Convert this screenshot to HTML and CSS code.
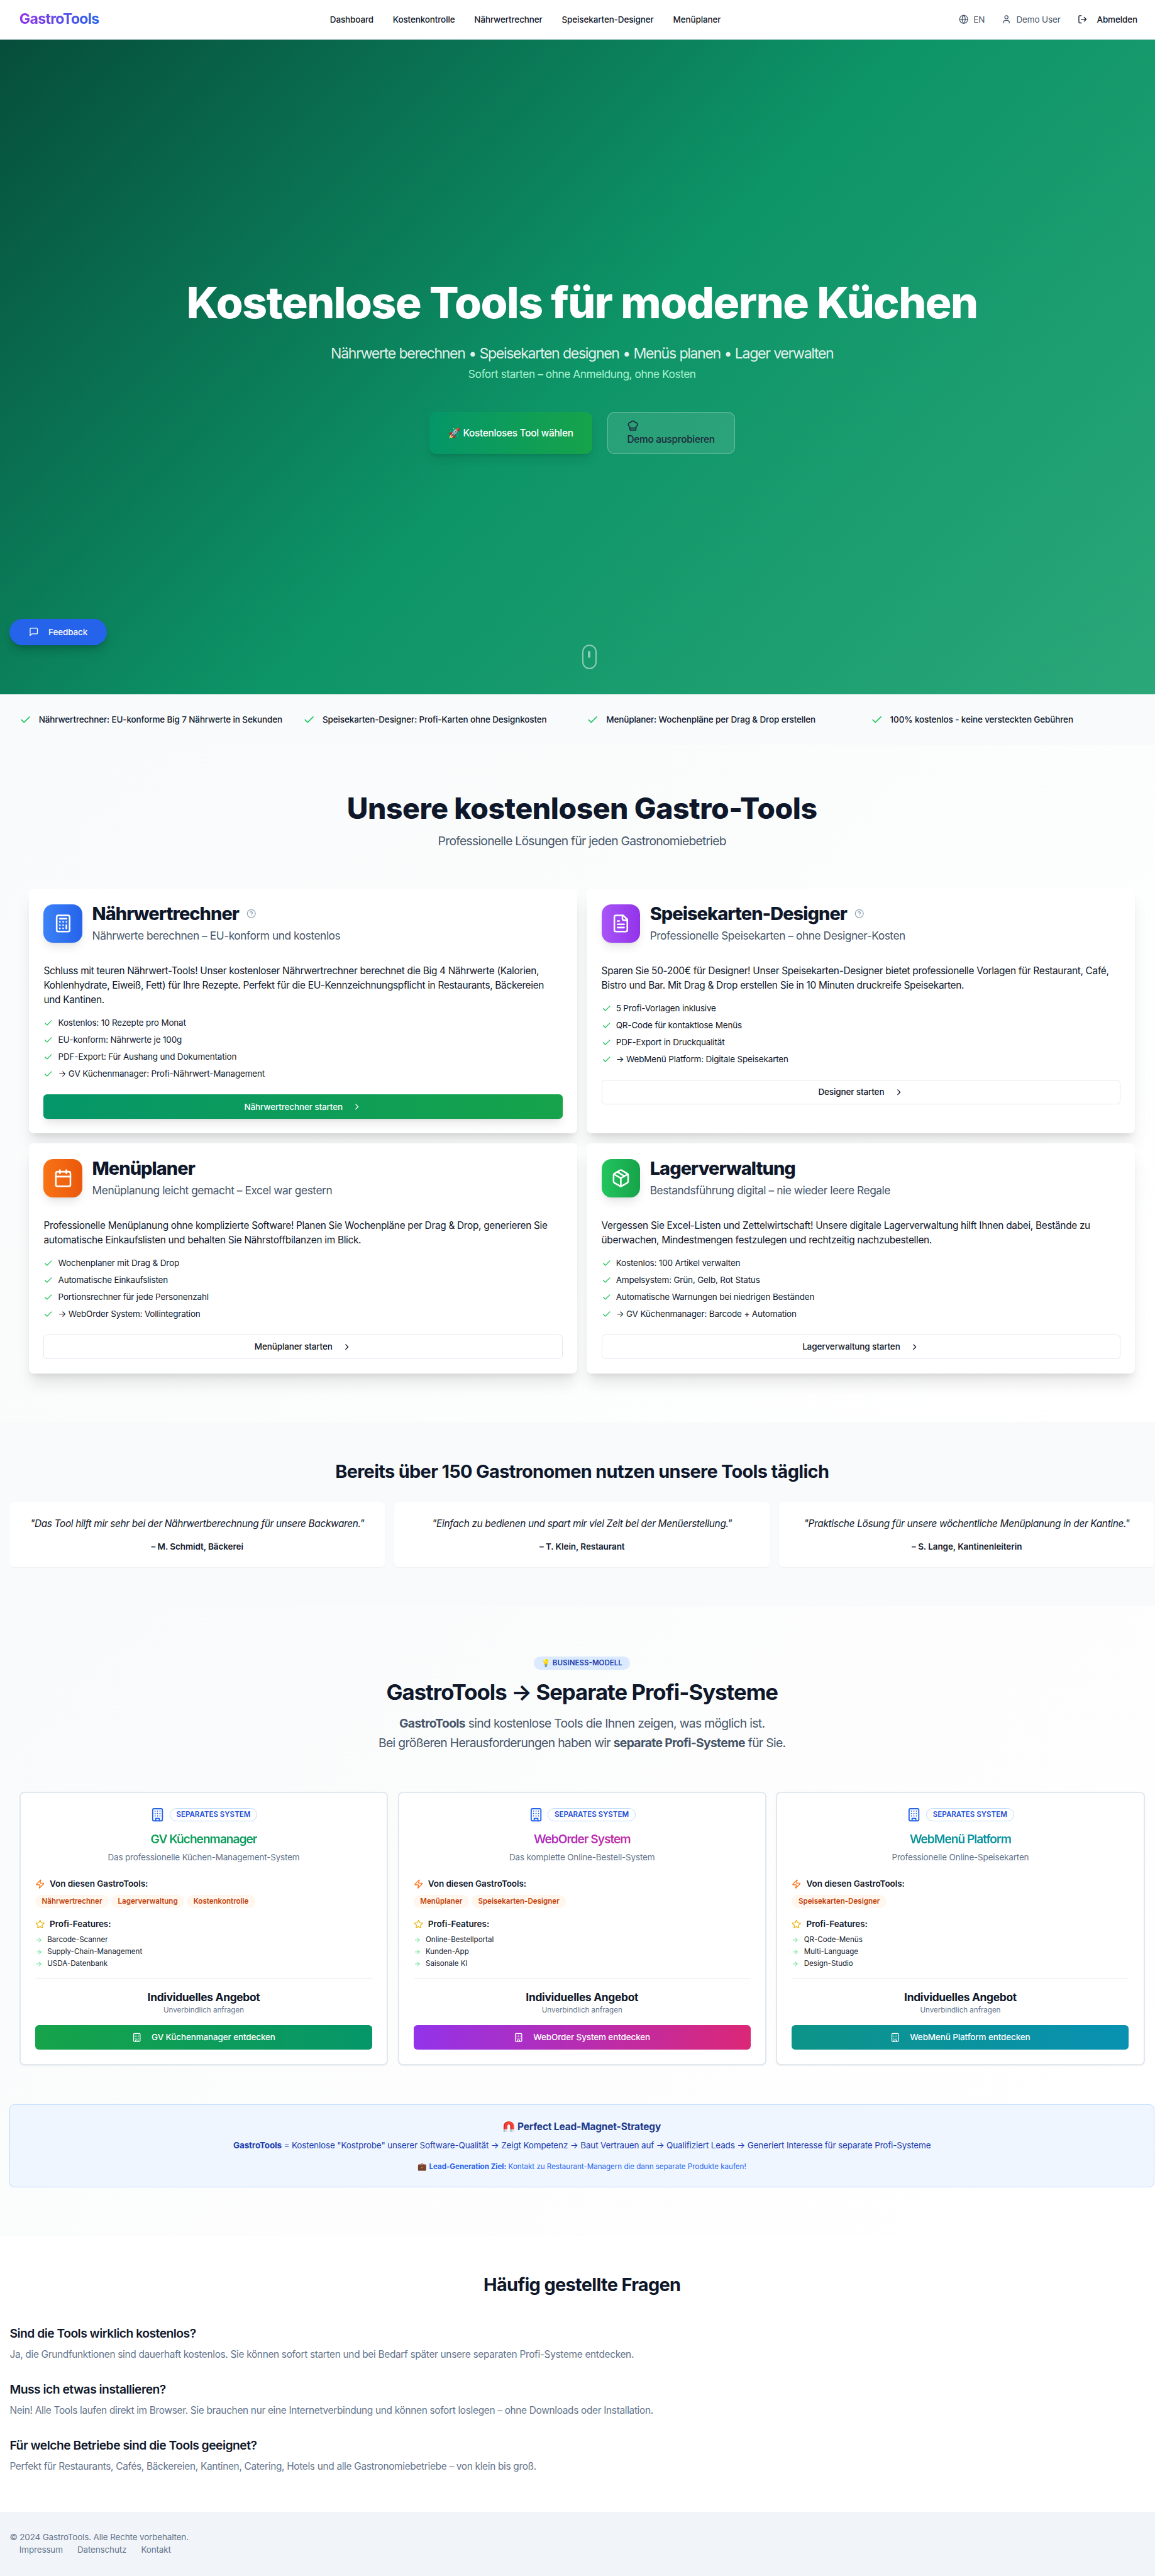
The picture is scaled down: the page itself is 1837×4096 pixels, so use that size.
FILE: index.html
```html
<!DOCTYPE html>
<html lang="de">
<head>
<meta charset="utf-8">
<meta name="viewport" content="width=device-width, initial-scale=1">
<title>GastroTools – Kostenlose Tools für moderne Küchen</title>
<link rel="stylesheet" href="styles.css">
</head>
<body>
<svg class="sprite" aria-hidden="true">
  <symbol id="i-globe" viewBox="0 0 24 24"><circle cx="12" cy="12" r="10"/><path d="M12 2a14.5 14.5 0 0 0 0 20 14.5 14.5 0 0 0 0-20"/><path d="M2 12h20"/></symbol>
  <symbol id="i-user" viewBox="0 0 24 24"><path d="M19 21v-2a4 4 0 0 0-4-4H9a4 4 0 0 0-4 4v2"/><circle cx="12" cy="7" r="4"/></symbol>
  <symbol id="i-logout" viewBox="0 0 24 24"><path d="M9 21H5a2 2 0 0 1-2-2V5a2 2 0 0 1 2-2h4"/><path d="m16 17 5-5-5-5"/><path d="M21 12H9"/></symbol>
  <symbol id="i-chef" viewBox="0 0 24 24"><path d="M17 21a1 1 0 0 0 1-1v-5.35c0-.457.316-.844.727-1.041a4 4 0 0 0-2.134-7.589 5 5 0 0 0-9.186 0 4 4 0 0 0-2.134 7.588c.411.198.727.585.727 1.041V20a1 1 0 0 0 1 1Z"/><path d="M6 17h12"/></symbol>
  <symbol id="i-message" viewBox="0 0 24 24"><path d="M21 15a2 2 0 0 1-2 2H7l-4 4V5a2 2 0 0 1 2-2h14a2 2 0 0 1 2 2z"/></symbol>
  <symbol id="i-check" viewBox="0 0 24 24"><path d="M20 6 9 17l-5-5"/></symbol>
  <symbol id="i-help" viewBox="0 0 24 24"><circle cx="12" cy="12" r="10"/><path d="M9.09 9a3 3 0 0 1 5.83 1c0 2-3 3-3 3"/><path d="M12 17h.01"/></symbol>
  <symbol id="i-chevron" viewBox="0 0 24 24"><path d="m9 18 6-6-6-6"/></symbol>
  <symbol id="i-calculator" viewBox="0 0 24 24"><rect width="16" height="20" x="4" y="2" rx="2"/><path d="M8 6h8"/><path d="M16 14v4"/><path d="M16 10h.01M12 10h.01M8 10h.01M12 14h.01M8 14h.01M12 18h.01M8 18h.01"/></symbol>
  <symbol id="i-file" viewBox="0 0 24 24"><path d="M15 2H6a2 2 0 0 0-2 2v16a2 2 0 0 0 2 2h12a2 2 0 0 0 2-2V7Z"/><path d="M14 2v4a2 2 0 0 0 2 2h4"/><path d="M10 9H8"/><path d="M16 13H8"/><path d="M16 17H8"/></symbol>
  <symbol id="i-calendar" viewBox="0 0 24 24"><path d="M8 2v4"/><path d="M16 2v4"/><rect width="18" height="18" x="3" y="4" rx="2"/><path d="M3 10h18"/></symbol>
  <symbol id="i-package" viewBox="0 0 24 24"><path d="M11 21.73a2 2 0 0 0 2 0l7-4A2 2 0 0 0 21 16V8a2 2 0 0 0-1-1.73l-7-4a2 2 0 0 0-2 0l-7 4A2 2 0 0 0 3 8v8a2 2 0 0 0 1 1.73z"/><path d="M12 22V12"/><path d="m3.3 7 8.7 5 8.7-5"/><path d="m7.5 4.27 9 5.15"/></symbol>
  <symbol id="i-building" viewBox="0 0 24 24"><rect width="16" height="20" x="4" y="2" rx="2"/><path d="M9 22v-4h6v4"/><path d="M8 6h.01M16 6h.01M12 6h.01M12 10h.01M12 14h.01M16 10h.01M16 14h.01M8 10h.01M8 14h.01"/></symbol>
  <symbol id="i-zap" viewBox="0 0 24 24"><path d="M4 14a1 1 0 0 1-.78-1.63l9.9-10.2a.5.5 0 0 1 .86.46l-1.92 6.02A1 1 0 0 0 13 10h7a1 1 0 0 1 .78 1.63l-9.9 10.2a.5.5 0 0 1-.86-.46l1.92-6.02A1 1 0 0 0 11 14z"/></symbol>
  <symbol id="i-star" viewBox="0 0 24 24"><path d="m12 2 3.09 6.26L22 9.27l-5 4.87 1.18 6.88L12 17.77l-6.18 3.25L7 14.14 2 9.27l6.91-1.01z"/></symbol>
  <symbol id="i-arrow" viewBox="0 0 24 24"><path d="M5 12h14"/><path d="m12 5 7 7-7 7"/></symbol>
</svg>

<div class="page">
  <header class="topbar">
    <a class="logo">GastroTools</a>
    <nav class="nav">
      <a>Dashboard</a><a>Kostenkontrolle</a><a>Nährwertrechner</a><a>Speisekarten-Designer</a><a>Menüplaner</a>
    </nav>
    <div class="account">
      <span class="account-item"><svg class="icon"><use href="#i-globe"/></svg>EN</span>
      <span class="account-item user"><svg class="icon"><use href="#i-user"/></svg>Demo User</span>
      <button class="logout"><svg class="icon"><use href="#i-logout"/></svg>Abmelden</button>
    </div>
  </header>

  <section class="hero">
    <div class="hero-inner">
      <h1>Kostenlose Tools für moderne Küchen</h1>
      <p class="hero-lead">Nährwerte berechnen • Speisekarten designen • Menüs planen • Lager verwalten</p>
      <p class="hero-note">Sofort starten – ohne Anmeldung, ohne Kosten</p>
      <div class="hero-actions">
        <button class="cta">🚀 Kostenloses Tool wählen</button>
        <button class="cta cta-ghost"><svg class="icon icon-20"><use href="#i-chef"/></svg>Demo ausprobieren</button>
      </div>
    </div>
    <button class="feedback"><svg class="icon"><use href="#i-message"/></svg>Feedback</button>
    <div class="mouse"><span></span></div>
  </section>

  <section class="benefits">
    <div><svg class="icon icon-20"><use href="#i-check"/></svg>Nährwertrechner: EU-konforme Big 7 Nährwerte in Sekunden</div>
    <div><svg class="icon icon-20"><use href="#i-check"/></svg>Speisekarten-Designer: Profi-Karten ohne Designkosten</div>
    <div><svg class="icon icon-20"><use href="#i-check"/></svg>Menüplaner: Wochenpläne per Drag &amp; Drop erstellen</div>
    <div><svg class="icon icon-20"><use href="#i-check"/></svg>100% kostenlos - keine versteckten Gebühren</div>
  </section>

  <section class="tools">
    <h2>Unsere kostenlosen Gastro-Tools</h2>
    <p class="section-lead">Professionelle Lösungen für jeden Gastronomiebetrieb</p>
    <div class="tool-grid">
      <article class="tool">
        <div class="tool-head">
          <div class="tool-icon blue"><svg class="icon icon-32"><use href="#i-calculator"/></svg></div>
          <div>
            <h3>Nährwertrechner<svg class="icon help"><use href="#i-help"/></svg></h3>
            <p>Nährwerte berechnen – EU-konform und kostenlos</p>
          </div>
        </div>
        <p class="tool-text">Schluss mit teuren Nährwert-Tools! Unser kostenloser Nährwertrechner berechnet die Big 4 Nährwerte (Kalorien, Kohlenhydrate, Eiweiß, Fett) für Ihre Rezepte. Perfekt für die EU-Kennzeichnungspflicht in Restaurants, Bäckereien und Kantinen.</p>
        <ul class="checks">
          <li><svg class="icon"><use href="#i-check"/></svg>Kostenlos: 10 Rezepte pro Monat</li>
          <li><svg class="icon"><use href="#i-check"/></svg>EU-konform: Nährwerte je 100g</li>
          <li><svg class="icon"><use href="#i-check"/></svg>PDF-Export: Für Aushang und Dokumentation</li>
          <li><svg class="icon"><use href="#i-check"/></svg>→ GV Küchenmanager: Profi-Nährwert-Management</li>
        </ul>
        <button class="btn btn-primary">Nährwertrechner starten<svg class="icon"><use href="#i-chevron"/></svg></button>
      </article>
      <article class="tool">
        <div class="tool-head">
          <div class="tool-icon purple"><svg class="icon icon-32"><use href="#i-file"/></svg></div>
          <div>
            <h3>Speisekarten-Designer<svg class="icon help"><use href="#i-help"/></svg></h3>
            <p>Professionelle Speisekarten – ohne Designer-Kosten</p>
          </div>
        </div>
        <p class="tool-text">Sparen Sie 50-200€ für Designer! Unser Speisekarten-Designer bietet professionelle Vorlagen für Restaurant, Café, Bistro und Bar. Mit Drag &amp; Drop erstellen Sie in 10 Minuten druckreife Speisekarten.</p>
        <ul class="checks">
          <li><svg class="icon"><use href="#i-check"/></svg>5 Profi-Vorlagen inklusive</li>
          <li><svg class="icon"><use href="#i-check"/></svg>QR-Code für kontaktlose Menüs</li>
          <li><svg class="icon"><use href="#i-check"/></svg>PDF-Export in Druckqualität</li>
          <li><svg class="icon"><use href="#i-check"/></svg>→ WebMenü Platform: Digitale Speisekarten</li>
        </ul>
        <button class="btn btn-outline">Designer starten<svg class="icon"><use href="#i-chevron"/></svg></button>
      </article>
      <article class="tool">
        <div class="tool-head">
          <div class="tool-icon orange"><svg class="icon icon-32"><use href="#i-calendar"/></svg></div>
          <div>
            <h3>Menüplaner</h3>
            <p>Menüplanung leicht gemacht – Excel war gestern</p>
          </div>
        </div>
        <p class="tool-text">Professionelle Menüplanung ohne komplizierte Software! Planen Sie Wochenpläne per Drag &amp; Drop, generieren Sie automatische Einkaufslisten und behalten Sie Nährstoffbilanzen im Blick.</p>
        <ul class="checks">
          <li><svg class="icon"><use href="#i-check"/></svg>Wochenplaner mit Drag &amp; Drop</li>
          <li><svg class="icon"><use href="#i-check"/></svg>Automatische Einkaufslisten</li>
          <li><svg class="icon"><use href="#i-check"/></svg>Portionsrechner für jede Personenzahl</li>
          <li><svg class="icon"><use href="#i-check"/></svg>→ WebOrder System: Vollintegration</li>
        </ul>
        <button class="btn btn-outline">Menüplaner starten<svg class="icon"><use href="#i-chevron"/></svg></button>
      </article>
      <article class="tool">
        <div class="tool-head">
          <div class="tool-icon green"><svg class="icon icon-32"><use href="#i-package"/></svg></div>
          <div>
            <h3>Lagerverwaltung</h3>
            <p>Bestandsführung digital – nie wieder leere Regale</p>
          </div>
        </div>
        <p class="tool-text">Vergessen Sie Excel-Listen und Zettelwirtschaft! Unsere digitale Lagerverwaltung hilft Ihnen dabei, Bestände zu überwachen, Mindestmengen festzulegen und rechtzeitig nachzubestellen.</p>
        <ul class="checks">
          <li><svg class="icon"><use href="#i-check"/></svg>Kostenlos: 100 Artikel verwalten</li>
          <li><svg class="icon"><use href="#i-check"/></svg>Ampelsystem: Grün, Gelb, Rot Status</li>
          <li><svg class="icon"><use href="#i-check"/></svg>Automatische Warnungen bei niedrigen Beständen</li>
          <li><svg class="icon"><use href="#i-check"/></svg>→ GV Küchenmanager: Barcode + Automation</li>
        </ul>
        <button class="btn btn-outline">Lagerverwaltung starten<svg class="icon"><use href="#i-chevron"/></svg></button>
      </article>
    </div>
  </section>

  <section class="voices">
    <h2>Bereits über 150 Gastronomen nutzen unsere Tools täglich</h2>
    <div class="voice-grid">
      <blockquote><p>"Das Tool hilft mir sehr bei der Nährwertberechnung für unsere Backwaren."</p><footer>– M. Schmidt, Bäckerei</footer></blockquote>
      <blockquote><p>"Einfach zu bedienen und spart mir viel Zeit bei der Menüerstellung."</p><footer>– T. Klein, Restaurant</footer></blockquote>
      <blockquote><p>"Praktische Lösung für unsere wöchentliche Menüplanung in der Kantine."</p><footer>– S. Lange, Kantinenleiterin</footer></blockquote>
    </div>
  </section>

  <section class="business">
    <span class="business-badge">💡 BUSINESS-MODELL</span>
    <h2>GastroTools → Separate Profi-Systeme</h2>
    <p class="business-lead"><strong>GastroTools</strong> sind kostenlose Tools die Ihnen zeigen, was möglich ist.<br>Bei größeren Herausforderungen haben wir <strong>separate Profi-Systeme</strong> für Sie.</p>
    <div class="system-grid">
      <article class="system">
        <div class="system-tag"><svg class="icon icon-24"><use href="#i-building"/></svg><span>SEPARATES SYSTEM</span></div>
        <h3 class="grad-green">GV Küchenmanager</h3>
        <p class="system-desc">Das professionelle Küchen-Management-System</p>
        <h4><svg class="icon zap"><use href="#i-zap"/></svg>Von diesen GastroTools:</h4>
        <div class="chips"><span>Nährwertrechner</span><span>Lagerverwaltung</span><span>Kostenkontrolle</span></div>
        <h4><svg class="icon star"><use href="#i-star"/></svg>Profi-Features:</h4>
        <ul class="features">
          <li><svg class="icon icon-12"><use href="#i-arrow"/></svg>Barcode-Scanner</li>
          <li><svg class="icon icon-12"><use href="#i-arrow"/></svg>Supply-Chain-Management</li>
          <li><svg class="icon icon-12"><use href="#i-arrow"/></svg>USDA-Datenbank</li>
        </ul>
        <div class="offer"><strong>Individuelles Angebot</strong><small>Unverbindlich anfragen</small></div>
        <button class="btn grad-green"><svg class="icon"><use href="#i-building"/></svg>GV Küchenmanager entdecken</button>
      </article>
      <article class="system">
        <div class="system-tag"><svg class="icon icon-24"><use href="#i-building"/></svg><span>SEPARATES SYSTEM</span></div>
        <h3 class="grad-pink">WebOrder System</h3>
        <p class="system-desc">Das komplette Online-Bestell-System</p>
        <h4><svg class="icon zap"><use href="#i-zap"/></svg>Von diesen GastroTools:</h4>
        <div class="chips"><span>Menüplaner</span><span>Speisekarten-Designer</span></div>
        <h4><svg class="icon star"><use href="#i-star"/></svg>Profi-Features:</h4>
        <ul class="features">
          <li><svg class="icon icon-12"><use href="#i-arrow"/></svg>Online-Bestellportal</li>
          <li><svg class="icon icon-12"><use href="#i-arrow"/></svg>Kunden-App</li>
          <li><svg class="icon icon-12"><use href="#i-arrow"/></svg>Saisonale KI</li>
        </ul>
        <div class="offer"><strong>Individuelles Angebot</strong><small>Unverbindlich anfragen</small></div>
        <button class="btn grad-pink"><svg class="icon"><use href="#i-building"/></svg>WebOrder System entdecken</button>
      </article>
      <article class="system">
        <div class="system-tag"><svg class="icon icon-24"><use href="#i-building"/></svg><span>SEPARATES SYSTEM</span></div>
        <h3 class="grad-teal">WebMenü Platform</h3>
        <p class="system-desc">Professionelle Online-Speisekarten</p>
        <h4><svg class="icon zap"><use href="#i-zap"/></svg>Von diesen GastroTools:</h4>
        <div class="chips"><span>Speisekarten-Designer</span></div>
        <h4><svg class="icon star"><use href="#i-star"/></svg>Profi-Features:</h4>
        <ul class="features">
          <li><svg class="icon icon-12"><use href="#i-arrow"/></svg>QR-Code-Menüs</li>
          <li><svg class="icon icon-12"><use href="#i-arrow"/></svg>Multi-Language</li>
          <li><svg class="icon icon-12"><use href="#i-arrow"/></svg>Design-Studio</li>
        </ul>
        <div class="offer"><strong>Individuelles Angebot</strong><small>Unverbindlich anfragen</small></div>
        <button class="btn grad-teal"><svg class="icon"><use href="#i-building"/></svg>WebMenü Platform entdecken</button>
      </article>
    </div>
    <div class="strategy">
      <h3><span class="magnet">🧲</span> Perfect Lead-Magnet-Strategy</h3>
      <p><strong>GastroTools</strong> = Kostenlose "Kostprobe" unserer Software-Qualität → Zeigt Kompetenz → Baut Vertrauen auf → Qualifiziert Leads → Generiert Interesse für separate Profi-Systeme</p>
      <small>💼 <strong>Lead-Generation Ziel:</strong> Kontakt zu Restaurant-Managern die dann separate Produkte kaufen!</small>
    </div>
  </section>

  <section class="faq">
    <h2>Häufig gestellte Fragen</h2>
    <dl>
      <dt>Sind die Tools wirklich kostenlos?</dt>
      <dd>Ja, die Grundfunktionen sind dauerhaft kostenlos. Sie können sofort starten und bei Bedarf später unsere separaten Profi-Systeme entdecken.</dd>
      <dt>Muss ich etwas installieren?</dt>
      <dd>Nein! Alle Tools laufen direkt im Browser. Sie brauchen nur eine Internetverbindung und können sofort loslegen – ohne Downloads oder Installation.</dd>
      <dt>Für welche Betriebe sind die Tools geeignet?</dt>
      <dd>Perfekt für Restaurants, Cafés, Bäckereien, Kantinen, Catering, Hotels und alle Gastronomiebetriebe – von klein bis groß.</dd>
    </dl>
  </section>

  <footer class="site-footer">
    <p>© 2024 GastroTools. Alle Rechte vorbehalten.</p>
    <div class="footer-links"><a>Impressum</a><a>Datenschutz</a><a>Kontakt</a></div>
  </footer>
</div>
</body>
</html>
```
FILE: styles.css
```css
/* Root size is fluid: one rem is 16/1905 of the window width. */
html { font-size: calc(100vw * 16 / 1905); overflow-x: hidden; background: #f1f5f9; }
*, *::before, *::after { box-sizing: border-box; }
body, h1, h2, h3, h4, p, ul, dl, dd, blockquote { margin: 0; padding: 0; }
body {
  font-family: Inter, "Noto Sans", "Noto Color Emoji", sans-serif;
  line-height: 1.5;
  color: #0f172a;
  overflow-x: hidden;
  -webkit-font-smoothing: antialiased;
}
ul { list-style: none; }
button { font: inherit; color: inherit; border: 0; background: none; }
.sprite { position: absolute; width: 0; height: 0; }
.page { width: 120rem; overflow: hidden; background: #fff; }

.icon {
  width: 1rem; height: 1rem; flex: none;
  fill: none; stroke: currentColor; stroke-width: 2;
  stroke-linecap: round; stroke-linejoin: round;
}
.icon-12 { width: .75rem; height: .75rem; }
.icon-20 { width: 1.25rem; height: 1.25rem; }
.icon-24 { width: 1.5rem; height: 1.5rem; }
.icon-32 { width: 2rem; height: 2rem; }

/* Top bar */
.topbar {
  height: 4.0625rem; padding: 0 2rem;
  display: flex; align-items: center; justify-content: space-between;
  border-bottom: 1px solid #e2e8f0;
}
.logo {
  font-size: 1.5rem; line-height: 2rem; font-weight: 700; letter-spacing: -.031em;
  background: linear-gradient(90deg, #9333ea, #2563eb);
  -webkit-background-clip: text; background-clip: text; color: transparent;
}
.nav { display: flex; gap: 2rem; font-size: .875rem; font-weight: 500; letter-spacing: -.01em; }
.account {
  display: flex; align-items: center; gap: 1rem; padding-left: .75rem;
  font-size: .875rem; letter-spacing: -.01em; color: #475569;
}
.account-item { display: flex; align-items: center; gap: .5rem; }
.user { margin-left: .75rem; }
.logout {
  display: flex; align-items: center; gap: 1rem; padding: 0 .75rem;
  font-weight: 500; letter-spacing: -.01em; color: #0f172a;
}

/* Hero */
.hero {
  position: relative; height: 67.5rem;
  display: flex; align-items: center; justify-content: center;
  background: linear-gradient(135deg, #064e3b 0%, #0d9467 50%, #2ba87a 100%);
  color: #fff; text-align: center;
}
.hero-inner { padding-top: .1875rem; }
.hero h1 { font-size: 4.5rem; line-height: 1; font-weight: 850; letter-spacing: -.021em; }
.hero-lead { margin-top: 1.9375rem; font-size: 1.5rem; line-height: 2rem; letter-spacing: -.058em; word-spacing: .02em; color: rgba(255,255,255,.9); }
.hero-note { margin-top: .25rem; font-size: 1.125rem; line-height: 1.75rem; letter-spacing: -.027em; color: #a7f3d0; }
.hero-actions { margin-top: 3rem; display: flex; gap: 1.5rem; justify-content: center; }
.cta {
  height: 4.375rem; padding: 0 2rem; border-radius: .75rem;
  font-size: 1rem; font-weight: 500; line-height: 1.5rem; letter-spacing: -.02em;
  text-align: left; white-space: nowrap;
  background: linear-gradient(90deg, #059669, #16a34a);
  box-shadow: 0 .625rem .9375rem -.1875rem rgba(0,0,0,.1), 0 .25rem .375rem -.25rem rgba(0,0,0,.1);
}
.cta-ghost {
  background: rgba(255,255,255,.1); border: 1px solid rgba(255,255,255,.3);
  color: #1e293b; box-shadow: none;
}
.cta-ghost .icon { display: block; }
.feedback {
  position: absolute; left: 1rem; bottom: 5.0625rem;
  width: 10rem; height: 2.75rem; padding: 0 2rem; border-radius: 2rem;
  display: flex; align-items: center; gap: 1rem;
  font-size: .875rem; font-weight: 500; letter-spacing: -.01em; color: #fff; background: #2563eb;
  box-shadow: 0 .625rem .9375rem -.1875rem rgba(0,0,0,.2), 0 .25rem .375rem -.25rem rgba(0,0,0,.2);
}
.mouse {
  position: absolute; left: 50%; bottom: 2.625rem;
  width: 1.5rem; height: 2.5rem; padding-top: .5rem;
  border: 2px solid rgba(255,255,255,.5); border-radius: 1rem;
  display: flex; justify-content: center;
}
.mouse span { width: .25rem; height: .75rem; border-radius: .25rem; background: rgba(255,255,255,.5); }

/* Benefits strip */
.benefits {
  padding: 2rem; display: grid; grid-template-columns: repeat(4, 1fr); gap: 1rem;
  background: #f8fafc; font-size: .875rem; line-height: 1.25rem; font-weight: 500; letter-spacing: -.01em;
}
.benefits div { display: flex; align-items: center; gap: .75rem; white-space: nowrap; }
.benefits .icon, .checks .icon { color: #22c55e; }

/* Tools */
.tools {
  padding: 5rem 3rem; text-align: center;
  background: linear-gradient(135deg, #f8fafc 0%, #fbfdfc 50%, #fff 100%);
}
.tools h2 { font-size: 3rem; line-height: 3rem; font-weight: 800; letter-spacing: -.009em; }
.section-lead { margin-top: 1rem; font-size: 1.25rem; line-height: 1.75rem; letter-spacing: -.038em; color: #475569; }
.tool-grid { margin-top: 4rem; display: grid; grid-template-columns: repeat(2, 1fr); gap: 1rem; text-align: left; }
.tool {
  padding: 1.5rem; border-radius: .5rem; background: #fff;
  box-shadow: 0 1.25rem 1.5625rem -.3125rem rgba(0,0,0,.1), 0 .5rem .625rem -.375rem rgba(0,0,0,.1);
}
.tool-head { display: flex; align-items: center; gap: 1rem; }
.tool-icon {
  width: 4rem; height: 4rem; border-radius: 1rem; color: #fff;
  display: flex; align-items: center; justify-content: center;
  box-shadow: 0 .625rem .9375rem -.1875rem rgba(0,0,0,.1), 0 .25rem .375rem -.25rem rgba(0,0,0,.1);
}
.blue { background: linear-gradient(90deg, #3b82f6, #2563eb); }
.purple { background: linear-gradient(90deg, #a855f7, #9333ea); }
.orange { background: linear-gradient(90deg, #f97316, #ea580c); }
.green { background: linear-gradient(90deg, #22c55e, #16a34a); }
.tool h3 {
  display: flex; align-items: center; gap: .75rem;
  font-size: 1.875rem; line-height: 2.25rem; font-weight: 800; letter-spacing: -.033em;
}
.help { color: #94a3b8; }
.tool-head p { margin-top: .25rem; font-size: 1.125rem; line-height: 1.75rem; letter-spacing: -.0265em; color: #475569; }
.tool-text { margin-top: 2rem; font-size: 1rem; line-height: 1.5rem; letter-spacing: -.0205em; }
.checks { margin-top: 1rem; display: grid; gap: .5rem; font-size: .875rem; line-height: 1.25rem; letter-spacing: -.013em; }
.checks li { display: flex; align-items: center; gap: .5rem; }
.btn {
  width: 100%; height: 2.5rem; border-radius: .375rem;
  display: flex; align-items: center; justify-content: center; gap: 1rem;
  font-size: .875rem; font-weight: 500; letter-spacing: -.01em;
}
.tool .btn { margin-top: 1.5rem; }
.btn-primary {
  color: #fff; background: linear-gradient(90deg, #059669, #16a34a);
  box-shadow: 0 .625rem .9375rem -.1875rem rgba(0,0,0,.1), 0 .25rem .375rem -.25rem rgba(0,0,0,.1);
}
.btn-outline { border: 1px solid #e2e8f0; background: #fff; }

/* Testimonials */
.voices { padding: 4rem 1rem; background: #f8fafc; text-align: center; }
.voices h2, .faq h2 { font-size: 1.875rem; line-height: 2.25rem; font-weight: 700; letter-spacing: -.023em; }
.voice-grid { margin-top: 2rem; display: grid; grid-template-columns: repeat(3, 1fr); gap: 1rem; }
.voice-grid blockquote {
  padding: 1.5rem; border-radius: .5rem; background: #fff; line-height: 1.5rem;
  box-shadow: 0 1px 2px rgba(0,0,0,.05);
}
.voice-grid p { font-style: italic; letter-spacing: -.0225em; white-space: nowrap; }
.voice-grid footer { margin-top: 1rem; font-size: .875rem; line-height: 1.25rem; font-weight: 600; letter-spacing: -.005em; }

/* Professional systems */
.business {
  padding: 5.1875rem 1rem 5rem; text-align: center;
  background: linear-gradient(135deg, #f8fafc 0%, #fcfdfc 50%, #fff 100%);
}
.business-badge {
  display: block; width: fit-content; height: 1.375rem; margin: 0 auto; padding: 0 .8125rem;
  border-radius: 1rem; background: #dbeafe; color: #1e40af;
  font-size: .75rem; line-height: 1.375rem; font-weight: 600;
}
.business h2 { margin-top: 1rem; font-size: 2.25rem; line-height: 2.5rem; font-weight: 700; letter-spacing: -.028em; }
.business-lead { margin-top: 1rem; font-size: 1.25rem; line-height: 1.625; letter-spacing: -.034em; color: #475569; }
.system-grid { margin: 4rem 1rem 0; display: grid; grid-template-columns: repeat(3, 1fr); gap: 1rem; }
.system {
  padding: 1.5rem; border: 2px solid #e2e8f0; border-radius: .5rem; background: #fff;
  box-shadow: 0 1px 2px rgba(0,0,0,.05);
}
.system-tag { display: flex; align-items: center; justify-content: center; gap: .5rem; color: #2563eb; }
.system-tag span {
  height: 1.375rem; padding: 0 .625rem; border: 1px solid #bfdbfe; border-radius: 1rem;
  color: #1d4ed8; font-size: .75rem; line-height: 1.25rem; font-weight: 600;
}
.system h3 { margin-top: .875rem; font-size: 1.25rem; line-height: 1.75rem; font-weight: 600; letter-spacing: -.056em; }
.grad-green { background: linear-gradient(90deg, #16a34a, #059669); }
.grad-pink { background: linear-gradient(90deg, #9333ea, #db2777); }
.grad-teal { background: linear-gradient(90deg, #0d9488, #0891b2); }
.system h3 { -webkit-background-clip: text; background-clip: text; color: transparent; }
.system-desc { margin-top: .375rem; font-size: .875rem; line-height: 1.25rem; letter-spacing: -.0135em; color: #64748b; }
.system h4 {
  margin-top: 1rem; display: flex; align-items: center; gap: .5rem;
  font-size: .875rem; line-height: 1.25rem; font-weight: 600; letter-spacing: -.005em;
}
.system-desc + h4 { margin-top: 1.5rem; }
.zap { color: #f97316; }
.star { color: #eab308; }
.chips { margin-top: .5rem; display: flex; gap: .25rem; }
.chips span {
  height: 1.375rem; padding: 0 .6875rem; border-radius: 1rem;
  background: #fff7ed; color: #c2410c; font-size: .75rem; line-height: 1.375rem; font-weight: 600;
}
.features { margin-top: .5rem; display: grid; gap: .25rem; font-size: .75rem; line-height: 1rem; }
.features li { display: flex; align-items: center; gap: .5rem; }
.features .icon { color: #4ade80; }
.offer { margin: 1rem 0; padding-top: 1rem; border-top: 1px solid #e2e8f0; }
.offer strong { display: block; font-size: 1.125rem; line-height: 1.75rem; font-weight: 700; letter-spacing: -.017em; }
.offer small { display: block; font-size: .75rem; line-height: 1rem; color: #64748b; }
.system .btn { color: #fff; }

.strategy {
  margin-top: 4rem; padding: 1.5rem; border: 1px solid #bfdbfe; border-radius: .5rem;
  background: #eff6ff; color: #1e40af;
}
.strategy h3 { font-size: 1rem; line-height: 1.5rem; font-weight: 700; letter-spacing: -.008em; color: #1e3a8a; }
.magnet { display: inline-block; line-height: 1; transform: rotate(90deg); }
.strategy p { margin-top: .5rem; font-size: .875rem; line-height: 1.625; letter-spacing: -.0115em; }
.strategy small { display: block; margin-top: 1rem; font-size: .75rem; line-height: 1rem; color: #2563eb; }

/* FAQ */
.faq { padding: 4rem 1rem; background: #fff; }
.faq h2 { text-align: center; }
.faq dl { margin-top: 3rem; }
.faq dt { font-size: 1.25rem; line-height: 1.75rem; font-weight: 600; letter-spacing: -.026em; }
.faq dd { margin: .5rem 0 2rem; line-height: 1.5rem; letter-spacing: -.0208em; color: #64748b; }
.faq dd:last-child { margin-bottom: 0; }

/* Footer */
.site-footer { padding: 2rem 1rem; background: #f1f5f9; font-size: .875rem; line-height: 1.25rem; letter-spacing: -.0125em; color: #64748b; }
.footer-links { display: flex; gap: 1.5rem; padding-left: 1rem; }
```
